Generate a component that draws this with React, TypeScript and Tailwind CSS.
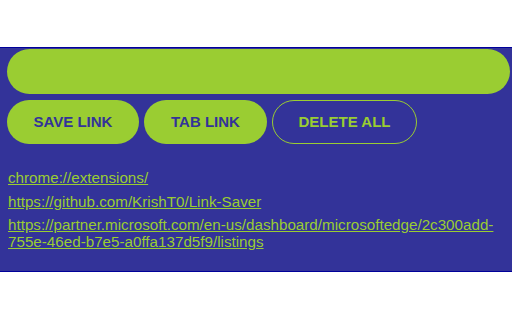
import React from "react";

const links = [
  "chrome://extensions/",
  "https://github.com/KrishT0/Link-Saver",
  "https://partner.microsoft.com/en-us/dashboard/microsoftedge/2c300add-755e-46ed-b7e5-a0ffa137d5f9/listings",
];

export default function App() {
  return (
    <div className="min-h-[320px] bg-white pt-[47px] font-['Liberation_Sans',Arial,sans-serif]">
      <div className="border-y border-[#000099] bg-[#333399] pt-px pb-[21px]">
        <input
          type="text"
          className="ml-[7px] block h-[45px] w-[503px] rounded-full border-0 bg-[#9acd32] px-5 outline-none"
        />

        <div className="ml-[7px] mt-[6px] flex gap-[5px]">
          <button className="h-[44px] w-[132px] rounded-full bg-[#9acd32] text-[15px] font-bold text-[#333399]">
            SAVE LINK
          </button>
          <button className="h-[44px] w-[123px] rounded-full bg-[#9acd32] text-[15px] font-bold text-[#333399]">
            TAB LINK
          </button>
          <button className="h-[44px] w-[145px] rounded-full border border-[#9acd32] text-[15px] font-bold text-[#9acd32]">
            DELETE ALL
          </button>
        </div>

        {/* saved links */}
        <div className="mt-[25px] flex flex-col gap-[6.5px] px-[8px]">
          {links.map((l) => (
            <a
              key={l}
              href="#"
              className="block text-[15.2px] leading-[17px] text-[#9acd32] underline break-words"
            >
              {l}
            </a>
          ))}
        </div>
      </div>
    </div>
  );
}
